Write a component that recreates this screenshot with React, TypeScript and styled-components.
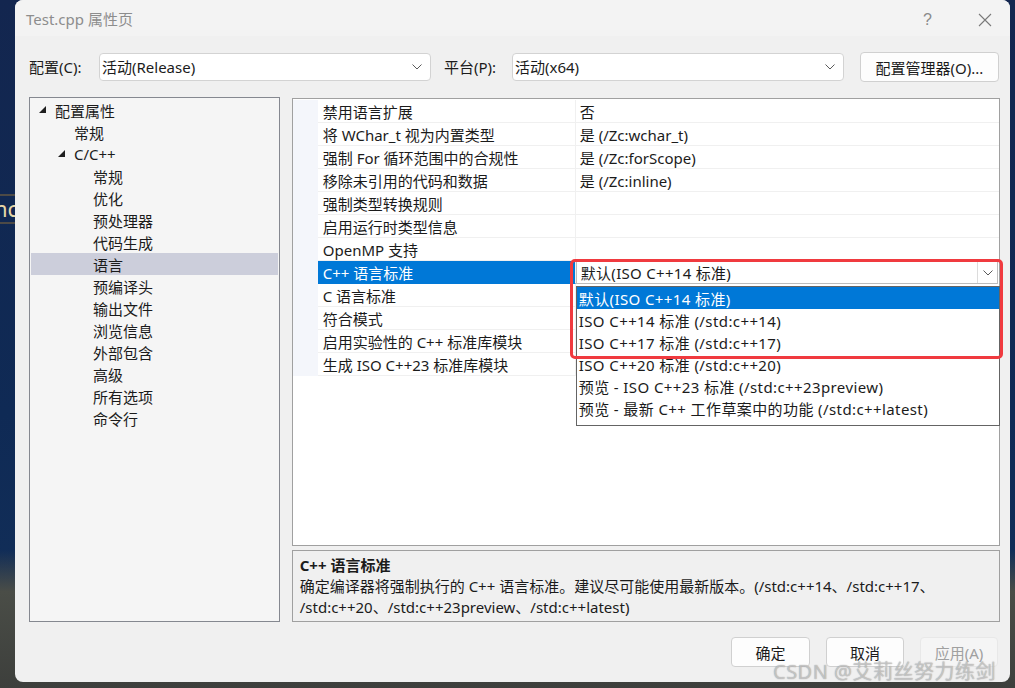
import styled, { createGlobalStyle } from "styled-components"

const GlobalStyle = createGlobalStyle`
  html, body { margin: 0; padding: 0; }
  body {
    font-family: "Noto Sans", "Noto Sans CJK SC", sans-serif;
    font-size: 15px;
    color: #1b1b1b;
  }
`

const treeItems = [
  { label: "配置属性", level: 0, open: true },
  { label: "常规", level: 1 },
  { label: "C/C++", level: 1, open: true },
  { label: "常规", level: 2 },
  { label: "优化", level: 2 },
  { label: "预处理器", level: 2 },
  { label: "代码生成", level: 2 },
  { label: "语言", level: 2, selected: true },
  { label: "预编译头", level: 2 },
  { label: "输出文件", level: 2 },
  { label: "浏览信息", level: 2 },
  { label: "外部包含", level: 2 },
  { label: "高级", level: 2 },
  { label: "所有选项", level: 2 },
  { label: "命令行", level: 2 },
]

const gridRows = [
  { name: "禁用语言扩展", value: "否" },
  { name: "将 WChar_t 视为内置类型", value: "是 (/Zc:wchar_t)" },
  { name: "强制 For 循环范围中的合规性", value: "是 (/Zc:forScope)" },
  { name: "移除未引用的代码和数据", value: "是 (/Zc:inline)" },
  { name: "强制类型转换规则", value: "" },
  { name: "启用运行时类型信息", value: "" },
  { name: "OpenMP 支持", value: "" },
  { name: "C++ 语言标准", value: "默认(ISO C++14 标准)", selected: true },
  { name: "C 语言标准", value: "" },
  { name: "符合模式", value: "" },
  { name: "启用实验性的 C++ 标准库模块", value: "" },
  { name: "生成 ISO C++23 标准库模块", value: "" },
]

const options = [
  "默认(ISO C++14 标准)",
  "ISO C++14 标准 (/std:c++14)",
  "ISO C++17 标准 (/std:c++17)",
  "ISO C++20 标准 (/std:c++20)",
  "预览 - ISO C++23 标准 (/std:c++23preview)",
  "预览 - 最新 C++ 工作草案中的功能 (/std:c++latest)",
]

const Chevron = () => (
  <svg width="10" height="6" viewBox="0 0 10 6">
    <polyline points="0.5,0.5 5,5 9.5,0.5" fill="none" stroke="#5a5a5a" strokeWidth="1" />
  </svg>
)

const Expander = () => (
  <svg width="7" height="7" viewBox="0 0 7 7">
    <polygon points="7,0 7,7 0,7" fill="#1e1e1e" />
  </svg>
)

const App = () => {
  return (
    <>
      <GlobalStyle />
      <Desktop>
        <DesktopFragment>nc</DesktopFragment>
        <Window>
          <TitleBar>
            <Title>Test.cpp 属性页</Title>
            <TitleButtons>
              <HelpMark>?</HelpMark>
              <svg width="14" height="14" viewBox="0 0 14 14">
                <path d="M1 1 L13 13 M13 1 L1 13" stroke="#7a7a7a" strokeWidth="1.1" />
              </svg>
            </TitleButtons>
          </TitleBar>

          <ConfigRow>
            <Label w={70}>配置(C):</Label>
            <Combo w={332}>
              <span>活动(Release)</span>
              <Chevron />
            </Combo>
            <Label w={68} ml={13}>平台(P):</Label>
            <Combo w={332}>
              <span>活动(x64)</span>
              <Chevron />
            </Combo>
            <Button w={139} ml={16}>配置管理器(O)...</Button>
          </ConfigRow>

          <Main>
            <Tree>
              {treeItems.map((t, i) => (
                <TreeRow key={i} selected={t.selected}>
                  <TreeIndent level={t.level}>{t.open && <Expander />}</TreeIndent>
                  <span>{t.label}</span>
                </TreeRow>
              ))}
            </Tree>

            <RightCol>
              <Grid>
                {gridRows.map((r, i) => (
                  <GridRow key={i}>
                    <Gutter />
                    <NameCell selected={r.selected}>{r.name}</NameCell>
                    {r.selected ? (
                      <ValueCombo>
                        <span>{r.value}</span>
                        <ComboButton>
                          <Chevron />
                        </ComboButton>
                      </ValueCombo>
                    ) : (
                      <ValueCell>{r.value}</ValueCell>
                    )}
                  </GridRow>
                ))}
                <DropList>
                  {options.map((o, i) => (
                    <DropItem key={i} selected={i === 0}>{o}</DropItem>
                  ))}
                </DropList>
                <Highlight />
              </Grid>
              <Description>
                <DescTitle>C++ 语言标准</DescTitle>
                <DescText>
                  确定编译器将强制执行的 C++ 语言标准。建议尽可能使用最新版本。(/std:c++14、/std:c++17、
                  <br />
                  /std:c++20、/std:c++23preview、/std:c++latest)
                </DescText>
              </Description>
            </RightCol>
          </Main>

          <Footer>
            <Button w={79}>确定</Button>
            <Button w={78}>取消</Button>
            <Button w={78} disabled>应用(A)</Button>
          </Footer>
        </Window>
        <Watermark>CSDN @艾莉丝努力练剑</Watermark>
      </Desktop>
    </>
  )
}
export default App

const Desktop = styled.div`
  position: relative;
  width: 1015px;
  height: 688px;
  overflow: hidden;
  background:
    linear-gradient(180deg, rgba(0,0,0,0) 0%, rgba(0,0,0,0) 80%, #4a4d47 86%, #3d3f3c 100%),
    linear-gradient(180deg, #13264f 0%, #0f2a55 60%, #13305a 100%);
`
const DesktopFragment = styled.div`
  position: absolute;
  left: -6px;
  top: 194px;
  width: 40px;
  height: 26px;
  border-top: 2px solid #4d4a46;
  border-bottom: 2px solid #4d4a46;
  color: #e6d7a8;
  font-size: 22px;
  line-height: 24px;
  font-family: "Noto Sans", sans-serif;
`
const Window = styled.div`
  position: relative;
  margin-left: 15px;
  width: 995px;
  height: 682px;
  background-color: #f0f0f0;
  border-radius: 8px;
  overflow: hidden;
  display: flex;
  flex-direction: column;
`
const TitleBar = styled.div`
  height: 36px;
  flex-shrink: 0;
  background-color: #f3f3f3;
  display: flex;
  align-items: center;
  justify-content: space-between;
  padding: 0 18px 0 11px;
`
const Title = styled.div`
  color: #8d8d8d;
  font-size: 15px;
`
const TitleButtons = styled.div`
  display: flex;
  align-items: center;
  gap: 46px;
  padding-top: 3px;
`
const HelpMark = styled.span`
  color: #8a8a8a;
  font-size: 16px;
  font-family: "Liberation Sans", sans-serif;
`
const ConfigRow = styled.div`
  display: flex;
  align-items: center;
  padding: 17px 11px 0 14px;
  height: 28px;
  line-height: 26px;
`
const Label = styled.div<{ w: number; ml?: number }>`
  width: ${({ w }) => w}px;
  margin-left: ${({ ml }) => ml || 0}px;
  flex-shrink: 0;
`
const Combo = styled.div<{ w: number }>`
  width: ${({ w }) => w}px;
  height: 28px;
  box-sizing: border-box;
  background-color: #ffffff;
  border: 1px solid #d3d3d3;
  border-radius: 4px;
  display: flex;
  align-items: center;
  justify-content: space-between;
  padding: 0 8px 0 2px;
`
const Button = styled.button<{ w: number; ml?: number }>`
  width: ${({ w }) => w}px;
  height: 30px;
  margin-left: ${({ ml }) => ml || 0}px;
  flex-shrink: 0;
  box-sizing: border-box;
  background-color: ${({ disabled }) => (disabled ? "#f5f5f5" : "#fdfdfd")};
  border: 1px solid ${({ disabled }) => (disabled ? "#e8e8e8" : "#d0d0d0")};
  border-radius: 4px;
  color: ${({ disabled }) => (disabled ? "#a0a0a0" : "#1b1b1b")};
  font-family: "Noto Sans", "Noto Sans CJK SC", sans-serif;
  font-size: 15px;
  padding: 0;
`
const Main = styled.div`
  display: flex;
  gap: 12px;
  margin-top: 16px;
  padding: 0 10px 0 14px;
  height: 525px;
`
const Tree = styled.div`
  width: 251px;
  height: 525px;
  box-sizing: border-box;
  background-color: #f5f5f5;
  border: 1px solid #858890;
  padding: 1px 1px;
`
const TreeRow = styled.div<{ selected?: boolean }>`
  height: 22px;
  display: flex;
  align-items: center;
  background-color: ${({ selected }) => (selected ? "#cccedb" : "transparent")};
`
const TreeIndent = styled.div<{ level: number }>`
  width: ${({ level }) => 24 + level * 19}px;
  flex-shrink: 0;
  display: flex;
  justify-content: flex-end;
  padding-right: 9px;
  box-sizing: border-box;
  padding-bottom: 2px;
`
const RightCol = styled.div`
  width: 709px;
  margin-top: 1px;
  display: flex;
  flex-direction: column;
  gap: 4px;
`
const Grid = styled.div`
  position: relative;
  height: 448px;
  box-sizing: border-box;
  background-color: #ffffff;
  border: 1px solid #a0a0a0;
  padding-top: 1px;
`
const GridRow = styled.div`
  display: flex;
  height: 23px;
`
const Gutter = styled.div`
  width: 25px;
  flex-shrink: 0;
  background-color: #f4f6fb;
`
const NameCell = styled.div<{ selected?: boolean }>`
  width: 258px;
  flex-shrink: 0;
  box-sizing: border-box;
  padding-left: 5px;
  display: flex;
  align-items: center;
  border-bottom: 1px solid ${({ selected }) => (selected ? "#0078d7" : "#f0f0f0")};
  border-right: 1px solid #f0f0f0;
  background-color: ${({ selected }) => (selected ? "#0078d7" : "transparent")};
  color: ${({ selected }) => (selected ? "#ffffff" : "#1b1b1b")};
`
const ValueCell = styled.div`
  flex: 1;
  box-sizing: border-box;
  padding-left: 4px;
  display: flex;
  align-items: center;
  border-bottom: 1px solid #f0f0f0;
`
const ValueCombo = styled.div`
  flex: 1;
  margin-right: 1px;
  box-sizing: border-box;
  border: 1px solid #bcbcbc;
  display: flex;
  align-items: center;
  justify-content: space-between;
  padding-left: 4px;
  letter-spacing: 0.3px;
`
const ComboButton = styled.div`
  width: 19px;
  height: 100%;
  border-left: 1px solid #dcdcdc;
  display: flex;
  align-items: center;
  justify-content: center;
`
const DropList = styled.div`
  position: absolute;
  left: 283px;
  top: 187px;
  width: 424px;
  height: 140px;
  box-sizing: border-box;
  background-color: #ffffff;
  border: 1px solid #646464;
`
const DropItem = styled.div<{ selected?: boolean }>`
  height: 22px;
  display: flex;
  align-items: center;
  padding-left: 2px;
  letter-spacing: 0.4px;
  background-color: ${({ selected }) => (selected ? "#0078d7" : "transparent")};
  color: ${({ selected }) => (selected ? "#ffffff" : "#1b1b1b")};
`
const Highlight = styled.div`
  position: absolute;
  left: 277px;
  top: 160px;
  width: 433px;
  height: 100px;
  box-sizing: border-box;
  border: 3px solid #f03a3f;
  border-radius: 5px;
`
const Description = styled.div`
  height: 72px;
  box-sizing: border-box;
  border: 1px solid #a0a0a0;
  background-color: #f0f0f0;
  padding: 3px 7px;
`
const DescTitle = styled.div`
  font-weight: 700;
  line-height: 22px;
`
const DescText = styled.div`
  line-height: 21px;
`
const Footer = styled.div`
  display: flex;
  justify-content: flex-end;
  gap: 16px;
  padding: 15px 12px 0 0;
`
const Watermark = styled.div`
  position: absolute;
  left: 773px;
  top: 656px;
  font-size: 20px;
  letter-spacing: 0.5px;
  color: rgba(225, 225, 225, 0.62);
  text-shadow: 0 0 1px rgba(90, 90, 90, 0.7);
  font-family: "Noto Sans", "Noto Sans CJK SC", sans-serif;
  white-space: nowrap;
`
